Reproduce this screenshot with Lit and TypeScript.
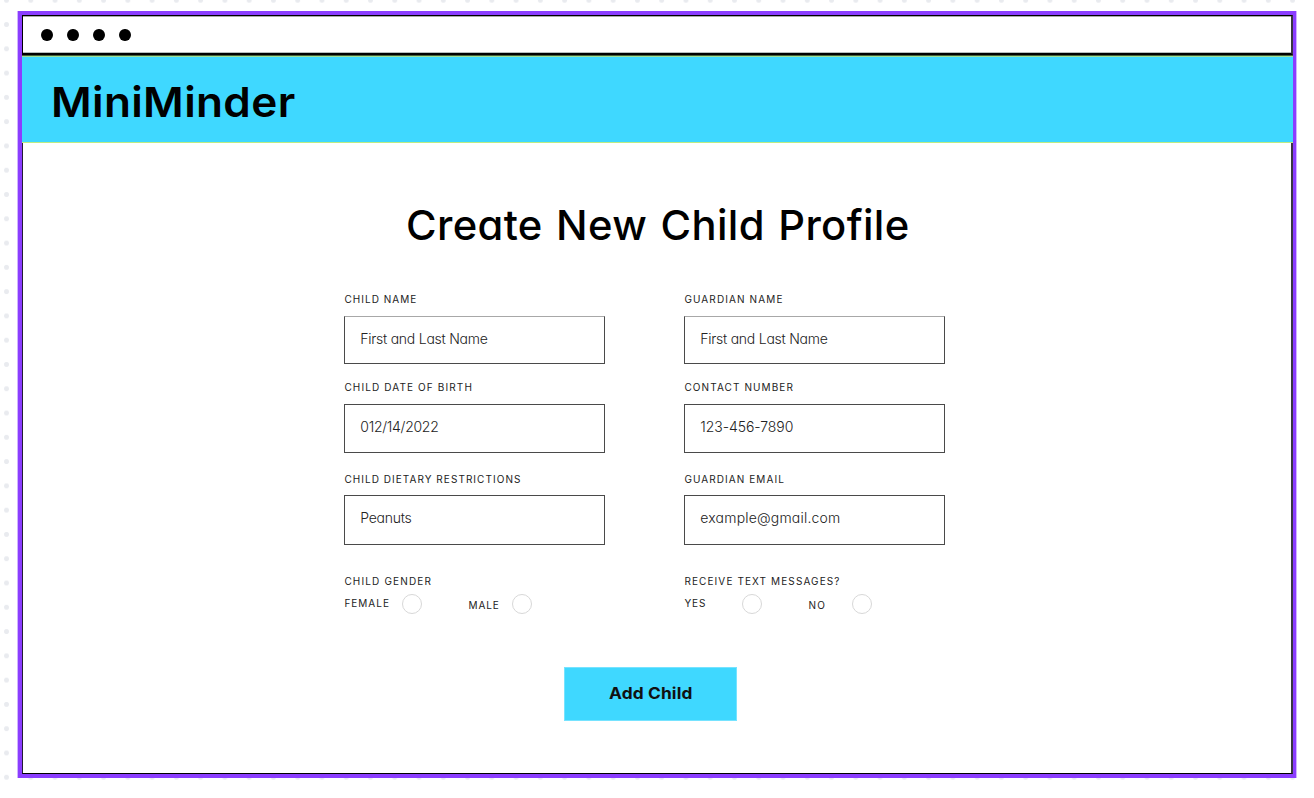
import { LitElement, html, css } from "lit";
import { customElement, property } from "lit/decorators.js";

/**
 * A single line of text that spans a given width. By default the tracking is
 * computed; with `stretch` the glyphs themselves are widened.
 */
@customElement("tracked-text")
class TrackedText extends LitElement {
  @property() text = "";
  @property({ type: Number }) span = 0;
  @property({ type: Boolean }) stretch = false;

  static styles = css`
    :host { display: block; white-space: nowrap; }
    .line { display: inline-block; vertical-align: top; transform-origin: 0 0; }
  `;

  render() {
    return html`<span class="line">${this.text}</span>`;
  }

  updated() {
    const line = this.renderRoot.querySelector(".line") as HTMLElement;
    line.style.transform = "none";
    line.style.letterSpacing = this.stretch ? "0.008em" : "0px";
    const natural = line.getBoundingClientRect().width;
    if (this.stretch) {
      line.style.transform = `scaleX(${this.span / natural})`;
      return;
    }
    const gaps = Math.max(1, this.text.length - 1);
    line.style.letterSpacing = (this.span - natural) / gaps + "px";
  }
}

interface Field { label: string; labelSpan: number; value: string; valueSpan: number; }
interface Choice { title: string; titleSpan: number; options: { label: string; span: number }[]; }

const rows: Field[][] = [
  [
    { label: "CHILD NAME", labelSpan: 72, value: "First and Last Name", valueSpan: 127.5 },
    { label: "GUARDIAN NAME", labelSpan: 98, value: "First and Last Name", valueSpan: 127.5 },
  ],
  [
    { label: "CHILD DATE OF BIRTH", labelSpan: 127.5, value: "012/14/2022", valueSpan: 78.5 },
    { label: "CONTACT NUMBER", labelSpan: 108.5, value: "123-456-7890", valueSpan: 93 },
  ],
  [
    { label: "CHILD DIETARY RESTRICTIONS", labelSpan: 176, value: "Peanuts", valueSpan: 51.5 },
    { label: "GUARDIAN EMAIL", labelSpan: 99.5, value: "example@gmail.com", valueSpan: 140 },
  ],
];

const choices: Choice[] = [
  { title: "CHILD GENDER", titleSpan: 86.5, options: [{ label: "FEMALE", span: 44.5 }, { label: "MALE", span: 30.5 }] },
  { title: "RECEIVE TEXT MESSAGES?", titleSpan: 155, options: [{ label: "YES", span: 21 }, { label: "NO", span: 16.5 }] },
];

@customElement("app-root")
class AppRoot extends LitElement {
  static styles = css`
    :host {
      display: block;
      box-sizing: border-box;
      height: 798px;
      padding: 11px 17px 20px;
      overflow: hidden;
      color: #000;
      font-family: Inter, "Open Sans", sans-serif;
      background:
        linear-gradient(#fff, #fff) 0 780px / 100% 18px no-repeat,
        radial-gradient(circle at center, #e9ebef 2.1px, rgba(233, 235, 239, 0) 2.9px) -5.63px -11.9px / 24.27px 24.29px,
        #fff;
    }
    .halo {
      width: 1280px;
      background: linear-gradient(90deg, #d0b4ff 1px, transparent 1px 1279px, #d0b4ff 1279px);
    }
    .frame {
      box-sizing: border-box;
      width: 1278px;
      height: 767px;
      margin-left: 1px;
      border: solid #8b3dff;
      border-width: 4px 3px 4px 4px;
      background: #fff;
    }
    .window { height: 759px; display: flex; flex-direction: column; }
    .chrome {
      box-sizing: border-box;
      height: 40px;
      border: solid #000;
      border-width: 1px 2px 2px 1px;
      border-right-color: #3a3742;
      box-shadow: inset 0 1px #a9a9a9, inset 0 -1px #b5bdbd;
      display: flex;
      gap: 14px;
      align-items: center;
      padding-left: 18px;
    }
    .dot { width: 12px; height: 12.6px; border-radius: 50%; background: #000; margin-top: 1.4px; }
    .brand {
      box-sizing: border-box;
      height: 88px;
      flex: none;
      background: #3fd8ff;
      border-top: 1px solid #45623c;
      border-bottom: 1px solid #bdeb83;
      box-shadow: inset 0 1px #9de29a;
      padding: 21px 0 0 29px;
    }
    .name { font-size: 41.5px; line-height: 50px; font-weight: 600; }
    .page {
      box-sizing: border-box;
      flex: 1;
      border: solid #000;
      border-width: 0 2px 1px 1px;
      border-left-color: #241d33;
      border-right-color: #3a3742;
      padding: 57px 0 0 321px;
    }
    .heading { font-size: 41.5px; line-height: 50px; font-weight: 450; word-spacing: 2px; margin-left: 61.5px; }
    .heading, .name, .box, .add { font-feature-settings: "cv11" 1; }
    .form { padding-top: 43px; }
    .pair { display: grid; grid-template-columns: 261px 261px; column-gap: 79px; }
    .first { height: 88px; }
    .second { height: 92px; }
    .third { height: 102px; }
    .label { font-size: 10px; line-height: 12px; color: #222; padding-left: 0.4px; }
    .box {
      box-sizing: border-box;
      height: 48px;
      margin-top: 11px;
      border: 1px solid #4a4a4a;
      padding: 12px 0 0 15.3px;
      font-size: 14px;
      line-height: 20px;
      font-weight: 300;
      color: #222;
    }
    .first .box { border-top-color: #a8a8a8; }
    .second .box { height: 49px; }
    .third .box { height: 50px; margin-top: 10px; }
    .options { display: flex; padding-top: 7px; }
    .option { display: grid; grid-template-columns: 58.4px 20px; width: 124px; }
    .option .label { padding-top: 3px; }
    .option + .option { grid-template-columns: 44.4px 20px; }
    .option + .option .label { padding-top: 5px; }
    .radio { box-sizing: border-box; width: 20px; height: 20px; border: 1px solid #d8d8d8; border-radius: 50%; }
    .add {
      box-sizing: border-box;
      width: 173px;
      height: 54px;
      margin: 53px 0 0 220px;
      padding: 15px 0 0 44px;
      border: 1px solid #76e3ff;
      background: #3fd8ff;
      color: #111;
      font-size: 16px;
      line-height: 20px;
      font-weight: 700;
    }
  `;

  render() {
    const names = ["first", "second", "third"];
    return html`
      <div class="halo"><div class="frame"><div class="window">
        <div class="chrome">${[0, 1, 2, 3].map(() => html`<span class="dot"></span>`)}</div>
        <header class="brand"><tracked-text class="name" stretch .text=${"MiniMinder"} .span=${244.5}></tracked-text></header>
        <main class="page">
          <tracked-text class="heading" stretch .text=${"Create New Child Profile"} .span=${503.5}></tracked-text>
          <div class="form">
            ${rows.map((row, i) => html`
              <div class="pair ${names[i]}">
                ${row.map((f) => html`
                  <div>
                    <tracked-text class="label" .text=${f.label} .span=${f.labelSpan}></tracked-text>
                    <div class="box"><tracked-text .text=${f.value} .span=${f.valueSpan}></tracked-text></div>
                  </div>`)}
              </div>`)}
            <div class="pair">
              ${choices.map((c) => html`
                <div>
                  <tracked-text class="label" .text=${c.title} .span=${c.titleSpan}></tracked-text>
                  <div class="options">
                    ${c.options.map((o) => html`
                      <div class="option">
                        <tracked-text class="label" .text=${o.label} .span=${o.span}></tracked-text>
                        <span class="radio"></span>
                      </div>`)}
                  </div>
                </div>`)}
            </div>
          </div>
          <div class="add" role="button"><tracked-text stretch .text=${"Add Child"} .span=${83.5}></tracked-text></div>
        </main>
      </div></div></div>
    `;
  }
}
